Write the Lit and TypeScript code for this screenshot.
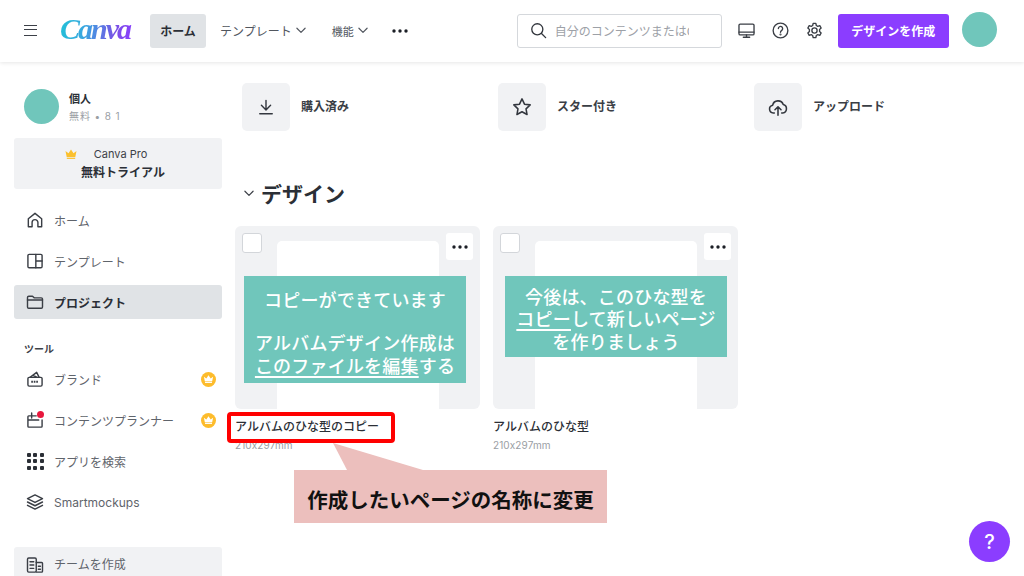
import { LitElement, html, css, svg } from "lit";
import { customElement } from "lit/decorators.js";

const ic = (body: unknown, size = 20) => html`<svg width="${size}" height="${size}" viewBox="0 0 24 24" fill="none" stroke="currentColor" stroke-width="1.7" stroke-linecap="round" stroke-linejoin="round">${body}</svg>`;
const chevron = html`<svg class="chev" width="10" height="7" viewBox="0 0 11 7" fill="none" stroke="currentColor" stroke-width="1.3" stroke-linecap="round" stroke-linejoin="round"><path d="M1 1l4.5 4.5L10 1"/></svg>`;
const dots = html`<svg width="16" height="4" viewBox="0 0 16 4" fill="currentColor"><circle cx="2" cy="2" r="1.7"/><circle cx="8" cy="2" r="1.7"/><circle cx="14" cy="2" r="1.7"/></svg>`;
const crown = html`<span class="crown-badge"><svg width="11" height="10" viewBox="0 0 12 10" fill="#fff"><path d="M1 2.500l2.600 2L6 1l2.400 3.500 2.600-2-1 5H2z"/><rect x="2.200" y="8" width="7.600" height="1.300"/></svg></span>`;

const I = {
  home: svg`<path d="M4 20V10.500L12 4l8 6.500V20h-4.500v-5a3.500 3.500 0 0 0-7 0v5z"/>`,
  tmpl: svg`<rect x="3.500" y="4" width="17" height="16" rx="1.500"/><path d="M13 4v16M13 12h7.500"/>`,
  folder: svg`<path d="M3 7V18a1.500 1.500 0 0 0 1.500 1.500h15A1.500 1.500 0 0 0 21 18V8.500A1.500 1.500 0 0 0 19.500 7H11L9 5H4.500A1.500 1.500 0 0 0 3 6.500z"/><path d="M3 9.500h18"/>`,
  brand: svg`<rect x="3.500" y="10" width="17" height="10.500" rx="1.500"/><path d="M6 10l8-6 3 6M9.500 7.500l5 2.500"/><path d="M7.500 15.300h9" stroke-width="2.500" stroke-dasharray="2 1" stroke-linecap="butt"/>`,
  plan: svg`<path d="M20.500 12v7.500a1 1 0 0 1-1 1h-15a1 1 0 0 1-1-1V8a1 1 0 0 1 1-1h9M8 3.500v6M3.500 12h13"/>`,
  stack: svg`<path d="M12 3.500l9 4.500-9 4.500L3 8z"/><path d="M3 12l9 4.500 9-4.500M3 16l9 4.500 9-4.500"/>`,
  team: svg`<rect x="3" y="3.500" width="10.500" height="17" rx="1.500"/><path d="M13.500 9H20a1 1 0 0 1 1 1v9.500a1 1 0 0 1-1 1h-6.500M6 8h4.500M6 12h4.500M6 16h4.500M16 13.500h2.500M16 17h2.500"/>`,
  download: svg`<path d="M12 4v11M6.500 10l5.500 5.500 5.500-5.500M4.500 20h15"/>`,
  star: svg`<path d="M12 3.200l2.700 5.700 6.200.8-4.500 4.300 1.100 6.200L12 17.200l-5.500 3 1.100-6.200-4.500-4.300 6.200-.8z"/>`,
  cloud: svg`<path d="M8 18.500H6.800a4.300 4.300 0 0 1-.6-8.500 6 6 0 0 1 11.500-.7 4.700 4.700 0 0 1-.5 9.200H16"/><path d="M12 21v-9M8.700 15L12 11.700 15.300 15"/>`,
  monitor: svg`<rect x="2.500" y="4" width="19" height="13.500" rx="1.500"/><path d="M2.500 14h19M8 20.500h8" /><path d="M12 17.500v3"/>`,
  help: svg`<circle cx="12" cy="12" r="9.300"/><path d="M9.300 9.500a2.700 2.700 0 1 1 4.200 2.300c-1 .7-1.500 1.200-1.500 2.400"/><circle cx="12" cy="17" r=".5"/>`,
  gear: svg`<circle cx="12" cy="12" r="3.300"/><path d="M10.300 3h3.400l.6 2.700 1.800 1 2.600-.8 1.700 3-2 1.800v2.600l2 1.800-1.700 3-2.600-.8-1.800 1-.6 2.700h-3.400l-.6-2.700-1.800-1-2.600.8-1.700-3 2-1.800v-2.600l-2-1.800 1.700-3 2.600.8 1.800-1z"/>`,
};

@customElement("app-root")
export class AppRoot extends LitElement {
  static styles = css`
    :host { display: block; width: 1024px; height: 576px; overflow: hidden; position: relative; background: #fff; color: #2b2f36;
      font-family: Inter, "Noto Sans CJK JP", "Noto Sans", sans-serif; font-size: 12px; }
    * { box-sizing: border-box; }
    svg { display: block; flex: none; }
    .top { height: 62px; display: flex; align-items: center; padding: 0 27px 1px 24px; box-shadow: 0 1px 4px rgba(0,0,0,.1); position: relative; }
    .burger { width: 13px; height: 11px; margin-top: -1px; border-top: 1.600px solid #3c4048; border-bottom: 1.600px solid #3c4048; position: relative; }
    .burger::after { content: ""; position: absolute; left: 0; right: 0; top: 3.200px; height: 1.600px; background: #3c4048; }
    .logo { margin-left: 23px; width: 90px; font: italic 700 30px/40px "Liberation Serif", serif; letter-spacing: -2px; margin-top: -3px;
      background: linear-gradient(100deg, #1fc3d6 0%, #3aa5e0 30%, #7a4fe6 62%, #8b3dff 80%); -webkit-background-clip: text; background-clip: text; color: transparent; }
    .tab { height: 34px; display: flex; align-items: center; gap: 4px; color: #51565e; font-size: 12px; }
    .tab.home { width: 56px; justify-content: center; background: #e0e3e6; border-radius: 3px; font-weight: 700; color: #2b2f36; font-size: 12px; }
    .tab.t { margin-left: 14px; font-size: 12px; }
    .tab.f { margin-left: 26px; font-size: 11px; }
    .more { margin-left: 24px; color: #1c1f26; }
    .search { margin-left: 109px; width: 205px; height: 34px; border: 1px solid #d5d8dc; border-radius: 3px; display: flex; align-items: center; gap: 7px; padding-left: 11px; color: #9da1a7; overflow: hidden; white-space: nowrap; }
    .search svg { color: #33373e; }
    .search span { width: 134px; overflow: hidden; font-size: 12px; }
    .ticons { display: flex; gap: 15px; margin-left: 15px; color: #3a3e45; }
    .create { margin-left: 14px; width: 111px; height: 34px; background: #8b3dff; color: #fff; border-radius: 3px; border: none; font: 700 12px "Noto Sans CJK JP", sans-serif; display: flex; align-items: center; justify-content: center; }
    .avatar { width: 35px; height: 35px; border-radius: 50%; background: #70c6bb; flex: none; }
    .top .avatar { margin-left: 13px; margin-top: -3px; }

    .body { display: flex; height: 514px; }
    .side { width: 236px; flex: none; padding: 27px 14px 0 14px; }
    .user { display: flex; align-items: center; gap: 10px; padding-left: 10px; }
    .uname { font-weight: 700; font-size: 11px; line-height: 16px; margin-top: 2px; }
    .umeta { font-size: 10px; line-height: 16px; color: #9a9ea4; margin-top: 1px; letter-spacing: .9px; }
    .pro { margin-top: 14px; height: 51px; background: #f1f2f4; border-radius: 3px; display: flex; flex-direction: column; align-items: center; justify-content: center; }
    .pro .l1 { display: flex; align-items: center; gap: 17px; font-size: 11px; line-height: 18px; color: #3d4148; margin-left: -24px; }
    .pro .l2 { font-weight: 700; font-size: 12px; line-height: 18px; margin-left: 10px; margin-top: 1px; }
    .nav { margin-top: 14px; display: flex; flex-direction: column; gap: 7px; }
    .nav.tools { margin-top: 6px; }
    .item { height: 34px; display: flex; align-items: center; gap: 9px; padding-left: 11px; padding-right: 6px; color: #5f646b; font-size: 12px; border-radius: 3px; position: relative; }
    .item svg { color: #3a3e45; }
    .item.on { background: #e0e3e6; color: #2b2f36; font-weight: 700; }
    .item .lbl { flex: 1; white-space: nowrap; }
    .crown-badge { width: 15px; height: 15px; border-radius: 50%; background: #fdbc2c; display: flex; align-items: center; justify-content: center; flex: none; }
    .tool-h { font-weight: 700; font-size: 10px; line-height: 14px; margin: 23px 0 2px 10px; color: #3d4148; }
    .red-dot { position: absolute; left: 23px; top: 8px; width: 7px; height: 7px; border-radius: 50%; background: #e8173d; }
    .grid9 { width: 20px; height: 20px; display: grid; grid-template-columns: repeat(3, 4px); grid-template-rows: repeat(3, 4px); gap: 2.500px; justify-content: center; align-content: center; flex: none; }
    .grid9 i { background: #2b2f36; border-radius: 1px; }
    .team { margin-top: 28px; background: #f1f2f4; height: 40px; align-items: flex-start; padding-top: 8px; }

    .main { flex: 1; padding: 21px 0 0 6px; }
    .quick { display: grid; grid-template-columns: repeat(3, 256px); }
    .q { display: flex; align-items: center; gap: 11px; font-weight: 700; font-size: 12px; color: #3a3e45; }
    .q span { margin-top: -4px; }
    .qi { width: 48px; height: 48px; background: #f1f2f4; border-radius: 5px; display: flex; align-items: center; justify-content: center; color: #33373e; }
    .h { display: flex; align-items: center; gap: 7px; margin-top: 46px; height: 32px; font-weight: 700; font-size: 21px; color: #2b2f36; padding-left: 2px; }
    .h .chev { color: #3a3e45; width: 10px; }
    .cards { display: flex; gap: 13px; margin-top: 17px; margin-left: -7px; }
    .card { width: 245px; }
    .thumb { height: 183px; background: #f1f2f4; border-radius: 6px; position: relative; overflow: hidden; display: flex; justify-content: center; padding-top: 15px; }
    .page { width: 162px; background: #fff; border-radius: 5px 5px 0 0; }
    .check { position: absolute; left: 7px; top: 7px; width: 20px; height: 20px; background: #fff; border: 1px solid #d3d6da; border-radius: 3px; }
    .menu { position: absolute; right: 7px; top: 7px; width: 27px; height: 27px; background: #fff; border-radius: 3px; display: flex; align-items: center; justify-content: center; color: #1c1f26; }
    .t1 { font-weight: 500; font-size: 12px; line-height: 16px; margin-top: 10px; color: #2b2f36; white-space: nowrap; }
    .t2 { font-size: 10px; line-height: 14px; margin-top: 3px; color: #9a9ea4; font-feature-settings: "calt" 0; letter-spacing: .1px; }

    .note { position: absolute; background: #70c6bb; color: #fff; font-family: "Noto Sans CJK JP", sans-serif; font-weight: 500; font-size: 18px; text-align: center; letter-spacing: .2px; display: flex; flex-direction: column; justify-content: center; white-space: nowrap; }
    .note u { text-underline-offset: 3px; text-decoration-thickness: 1.500px; }
    .n1 { left: 244px; top: 276px; width: 222px; height: 107px; line-height: 23px; padding-top: 5px; }
    .n1 .gap { height: 20px; }
    .n2 { left: 505px; top: 276px; width: 222px; height: 81px; line-height: 22.500px; padding-top: 4px; }
    .redbox { position: absolute; left: 227px; top: 412px; width: 168px; height: 31px; border: 4px solid #f00; border-radius: 4px; }
    .tail { position: absolute; left: 333px; top: 443px; overflow: visible; }
    .callout { position: absolute; left: 294px; top: 470px; width: 313px; height: 53px; padding-top: 4px; background: #ecbfbd; color: #111; font-family: "Noto Sans CJK JP", sans-serif; font-weight: 700; font-size: 20.500px; display: flex; align-items: center; justify-content: center; white-space: nowrap; }
    .fab { position: absolute; left: 969px; top: 521px; width: 41px; height: 41px; border-radius: 50%; background: #8b3dff; color: #fff; font-weight: 500; font-size: 20px; display: flex; align-items: center; justify-content: center; }
  `;

  private card(title: string) {
    return html`<div class="card">
      <div class="thumb"><div class="page"></div><div class="check"></div><div class="menu">${dots}</div></div>
      <div class="t1">${title}</div>
      <div class="t2">210x297mm</div>
    </div>`;
  }

  private item(icon: unknown, label: string, badge = false, extra: unknown = null, cls = "") {
    return html`<div class="item ${cls}">${icon}${extra}<span class="lbl">${label}</span>${badge ? crown : null}</div>`;
  }

  render() {
    return html`
      <header class="top">
        <div class="burger"></div>
        <div class="logo">Canva</div>
        <div class="tab home">ホーム</div>
        <div class="tab t">テンプレート${chevron}</div>
        <div class="tab f">機能${chevron}</div>
        <div class="more">${dots}</div>
        <div class="search">${ic(svg`<circle cx="10.500" cy="10.500" r="7"/><path d="M15.800 15.800L21 21"/>`, 19)}<span>自分のコンテンツまたはCanvaのコンテンツを検索</span></div>
        <div class="ticons">${ic(I.monitor, 19)}${ic(I.help, 19)}${ic(I.gear, 19)}</div>
        <div class="create">デザインを作成</div>
        <div class="avatar"></div>
      </header>
      <div class="body">
        <aside class="side">
          <div class="user"><div class="avatar"></div><div>
            <div class="uname">個人</div>
            <div class="umeta">無料 • 8 1</div>
          </div></div>
          <div class="pro">
            <div class="l1"><svg width="12" height="10" viewBox="0 0 12 10" fill="#fbc02d"><path d="M0.500 2l3 2.200L6 0.500l2.500 3.700 3-2.200-1.200 6H1.700z"/><rect x="1.800" y="8.700" width="8.400" height="1.200"/></svg><span>Canva Pro</span></div>
            <div class="l2">無料トライアル</div>
          </div>
          <nav class="nav">
            ${this.item(ic(I.home), "ホーム")}
            ${this.item(ic(I.tmpl), "テンプレート")}
            ${this.item(ic(I.folder), "プロジェクト", false, null, "on")}
          </nav>
          <div class="tool-h">ツール</div>
          <nav class="nav tools">
            ${this.item(ic(I.brand), "ブランド", true)}
            ${this.item(ic(I.plan), "コンテンツプランナー", true, html`<span class="red-dot"></span>`)}
            ${this.item(html`<span class="grid9">${Array.from({ length: 9 }, () => html`<i></i>`)}</span>`, "アプリを検索")}
            ${this.item(ic(I.stack), "Smartmockups")}
          </nav>
          ${this.item(ic(I.team), "チームを作成", false, null, "team")}
        </aside>
        <main class="main">
          <div class="quick">
            <div class="q"><div class="qi">${ic(I.download)}</div><span>購入済み</span></div>
            <div class="q"><div class="qi">${ic(I.star, 22)}</div><span>スター付き</span></div>
            <div class="q"><div class="qi">${ic(I.cloud, 22)}</div><span>アップロード</span></div>
          </div>
          <div class="h">${chevron}デザイン</div>
          <div class="cards">
            ${this.card("アルバムのひな型のコピー")}
            ${this.card("アルバムのひな型")}
          </div>
        </main>
      </div>
      <div class="note n1">
        <div>コピーができています</div>
        <div class="gap"></div>
        <div>アルバムデザイン作成は</div>
        <div><u>このファイルを編集</u>する</div>
      </div>
      <div class="note n2">
        <div>今後は、このひな型を</div>
        <div><u>コピー</u>して新しいページ</div>
        <div>を作りましょう</div>
      </div>
      <div class="redbox"></div>
      <svg class="tail" width="90" height="27" viewBox="0 0 90 27"><path d="M0 0L14 27H90z" fill="#ecbfbd"/></svg>
      <div class="callout">作成したいページの名称に変更</div>
      <div class="fab">?</div>
    `;
  }
}
